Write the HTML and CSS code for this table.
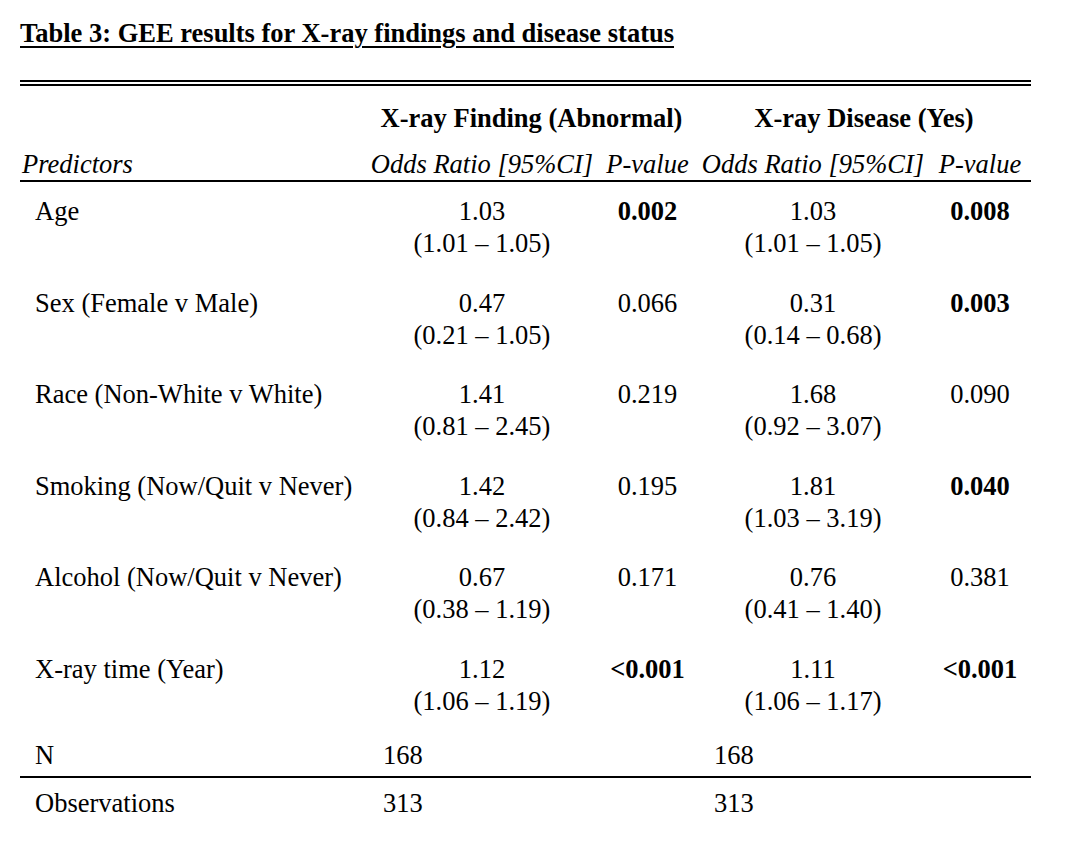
FILE: index.html
```html
<!DOCTYPE html>
<html lang="en">
<head>
<meta charset="utf-8">
<title>Table 3: GEE results</title>
<link rel="stylesheet" href="styles.css">
</head>
<body>
<div class="page">
  <h1 class="title"><span>Table 3: GEE results for X-ray findings and disease status</span></h1>
  <table class="gee">
    <colgroup>
      <col class="c-label">
      <col class="c-or">
      <col class="c-p1">
      <col class="c-or">
      <col class="c-p2">
    </colgroup>
    <thead>
      <tr class="group">
        <th></th>
        <th colspan="2">X-ray Finding (Abnormal)</th>
        <th colspan="2">X-ray Disease (Yes)</th>
      </tr>
      <tr class="sub">
        <th class="pred">Predictors</th>
        <th>Odds Ratio [95%CI]</th>
        <th>P-value</th>
        <th>Odds Ratio [95%CI]</th>
        <th>P-value</th>
      </tr>
    </thead>
    <tbody class="data">
      <tr>
        <td class="label">Age</td>
        <td class="or">1.03<br>(1.01 – 1.05)</td>
        <td class="p sig">0.002</td>
        <td class="or">1.03<br>(1.01 – 1.05)</td>
        <td class="p sig">0.008</td>
      </tr>
      <tr>
        <td class="label">Sex (Female v Male)</td>
        <td class="or">0.47<br>(0.21 – 1.05)</td>
        <td class="p">0.066</td>
        <td class="or">0.31<br>(0.14 – 0.68)</td>
        <td class="p sig">0.003</td>
      </tr>
      <tr>
        <td class="label">Race (Non-White v White)</td>
        <td class="or">1.41<br>(0.81 – 2.45)</td>
        <td class="p">0.219</td>
        <td class="or">1.68<br>(0.92 – 3.07)</td>
        <td class="p">0.090</td>
      </tr>
      <tr>
        <td class="label">Smoking (Now/Quit v Never)</td>
        <td class="or">1.42<br>(0.84 – 2.42)</td>
        <td class="p">0.195</td>
        <td class="or">1.81<br>(1.03 – 3.19)</td>
        <td class="p sig">0.040</td>
      </tr>
      <tr>
        <td class="label">Alcohol (Now/Quit v Never)</td>
        <td class="or">0.67<br>(0.38 – 1.19)</td>
        <td class="p">0.171</td>
        <td class="or">0.76<br>(0.41 – 1.40)</td>
        <td class="p">0.381</td>
      </tr>
      <tr>
        <td class="label">X-ray time (Year)</td>
        <td class="or">1.12<br>(1.06 – 1.19)</td>
        <td class="p sig">&lt;0.001</td>
        <td class="or">1.11<br>(1.06 – 1.17)</td>
        <td class="p sig">&lt;0.001</td>
      </tr>
    </tbody>
    <tbody class="foot">
      <tr class="n-row">
        <td class="label">N</td>
        <td class="count" colspan="2">168</td>
        <td class="count" colspan="2">168</td>
      </tr>
      <tr class="obs-row">
        <td class="label">Observations</td>
        <td class="count" colspan="2">313</td>
        <td class="count" colspan="2">313</td>
      </tr>
    </tbody>
  </table>
</div>
</body>
</html>
```

FILE: styles.css
```css
html, body {
  margin: 0;
  padding: 0;
  background: #ffffff;
}

body {
  font-family: "Liberation Serif", "Times New Roman", Times, serif;
  font-size: 26.5px;
  line-height: 32px;
  color: #000000;
}

.page {
  padding: 17px 0 0 20px;
}

.title {
  margin: 0 0 31px 0;
  font-size: 26.5px;
  line-height: 32px;
  font-weight: bold;
}

.title span {
  text-decoration: underline;
  text-decoration-thickness: 2px;
  text-underline-offset: 4px;
}

.gee {
  border-collapse: collapse;
  table-layout: fixed;
  width: 1011px;
}

.c-label { width: 346px; }
.c-or { width: 232px; }
.c-p1 { width: 99px; }
.c-p2 { width: 102px; }

.gee th,
.gee td {
  padding: 0;
  vertical-align: top;
  text-align: center;
  white-space: nowrap;
}

.group th {
  border-top: 6px double #000000;
  padding-top: 16px;
  font-weight: bold;
}

.sub th {
  padding-top: 14px;
  padding-bottom: 0;
  border-bottom: 2px solid #000000;
  font-weight: normal;
  font-style: italic;
}

.sub th.pred {
  text-align: left;
  padding-left: 2px;
}

.data td {
  padding-top: 13px;
  padding-bottom: 14.5px;
}

.gee td.label {
  text-align: left;
  padding-left: 15px;
}

.p.sig {
  font-weight: bold;
}

.gee td.count {
  text-align: left;
  padding-left: 17px;
}

.n-row td {
  padding-top: 8px;
  padding-bottom: 5px;
  border-bottom: 2px solid #000000;
}

.obs-row td {
  padding-top: 9px;
}
```
